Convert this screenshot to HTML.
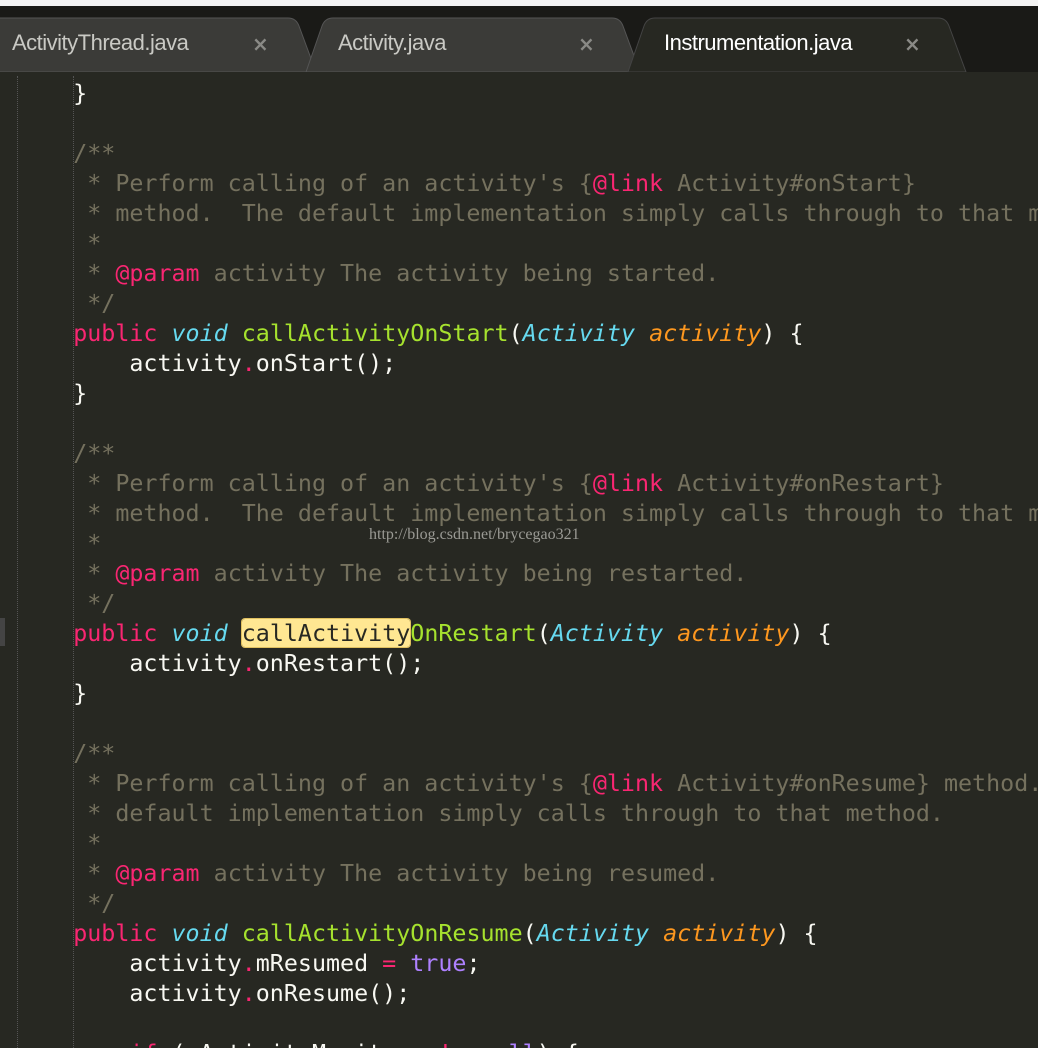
<!DOCTYPE html>
<html style="overflow:hidden"><head><meta charset="utf-8"><style>
html,body{margin:0;width:1038px;height:1048px;overflow:hidden}
body{background:#272822;position:relative}
.top{position:absolute;left:0;top:0;width:1038px;height:6px;background:#f4f4f4}
.bar{position:absolute;left:0;top:6px;width:1038px;height:66px;background:#1a1a17}
.tab{position:absolute;top:30px;font:22px "Liberation Sans",sans-serif;color:#c9c9c4;letter-spacing:-0.5px}
.x{position:absolute;top:32px;font:bold 20px "DejaVu Sans",sans-serif;color:#8a8a86}
pre{position:absolute;left:17px;top:78px;margin:0;width:1021px;height:970px;overflow:hidden;font:23.33px/30px "DejaVu Sans Mono","Liberation Mono",monospace;color:#f8f8f2}
.c{color:#75715e}.k{color:#f92672}.t{color:#66d9ef;font-style:italic}.f{color:#a6e22e}.a{color:#fd971f;font-style:italic}.p{color:#ae81ff}
.h{background:#ffe792;color:#272822;border-radius:3px;box-shadow:0 0 0 1px #e0c060}
.g{position:absolute;top:76px;width:0;height:972px;border-left:1px dotted #555}
.wm{position:absolute;left:369px;top:526px;font:16px "Liberation Serif",serif;color:#9a9a94}
</style></head><body>
<div class="top"></div><div class="bar"></div>
<svg style="position:absolute;left:0;top:0" width="1038" height="76">
<path d="M-10 72 L-10 18 L288 18 Q296 18 299 26 L316 72 Z" fill="#3b3b38" stroke="#555" />
<path d="M306 72 L322 26 Q325 18 333 18 L612 18 Q620 18 623 26 L640 72 Z" fill="#3b3b38" stroke="#555"/>
<path d="M628 72 L644 26 Q647 18 655 18 L938 18 Q946 18 949 26 L966 72 Z" fill="#272822" stroke="#444"/>
<rect x="0" y="72" width="1038" height="4" fill="#272822"/>
</svg>
<div class="tab" style="left:12px">ActivityThread.java</div><div class="x" style="left:252px">×</div>
<div class="tab" style="left:338px">Activity.java</div><div class="x" style="left:578px">×</div>
<div class="tab" style="left:664px;color:#fff">Instrumentation.java</div><div class="x" style="left:904px">×</div>
<div class="g" style="left:17px"></div><div class="g" style="left:73px"></div>
<div style="position:absolute;left:0;top:618px;width:5px;height:28px;background:#444"></div>
<pre>    }

    <span class="c">/**</span>
<span class="c">     * Perform calling of an activity's {</span><span class="k">@link</span><span class="c"> Activity#onStart}</span>
<span class="c">     * method.  The default implementation simply calls through to that method.</span>
<span class="c">     *</span>
<span class="c">     * </span><span class="k">@param</span><span class="c"> activity The activity being started.</span>
<span class="c">     */</span>
    <span class="k">public</span> <span class="t">void</span> <span class="f">callActivityOnStart</span>(<span class="t">Activity</span> <span class="a">activity</span>) {
        activity<span class="k">.</span>onStart();
    }

    <span class="c">/**</span>
<span class="c">     * Perform calling of an activity's {</span><span class="k">@link</span><span class="c"> Activity#onRestart}</span>
<span class="c">     * method.  The default implementation simply calls through to that method.</span>
<span class="c">     *</span>
<span class="c">     * </span><span class="k">@param</span><span class="c"> activity The activity being restarted.</span>
<span class="c">     */</span>
    <span class="k">public</span> <span class="t">void</span> <span class="h">callActivity</span><span class="f">OnRestart</span>(<span class="t">Activity</span> <span class="a">activity</span>) {
        activity<span class="k">.</span>onRestart();
    }

    <span class="c">/**</span>
<span class="c">     * Perform calling of an activity's {</span><span class="k">@link</span><span class="c"> Activity#onResume} method.  The</span>
<span class="c">     * default implementation simply calls through to that method.</span>
<span class="c">     *</span>
<span class="c">     * </span><span class="k">@param</span><span class="c"> activity The activity being resumed.</span>
<span class="c">     */</span>
    <span class="k">public</span> <span class="t">void</span> <span class="f">callActivityOnResume</span>(<span class="t">Activity</span> <span class="a">activity</span>) {
        activity<span class="k">.</span>mResumed <span class="k">=</span> <span class="p">true</span>;
        activity<span class="k">.</span>onResume();

        <span class="k">if</span> (mActivityMonitors <span class="k">!=</span> <span class="p">null</span>) {
</pre>
<div class="wm">http://blog.csdn.net/brycegao321</div>
</body></html>
